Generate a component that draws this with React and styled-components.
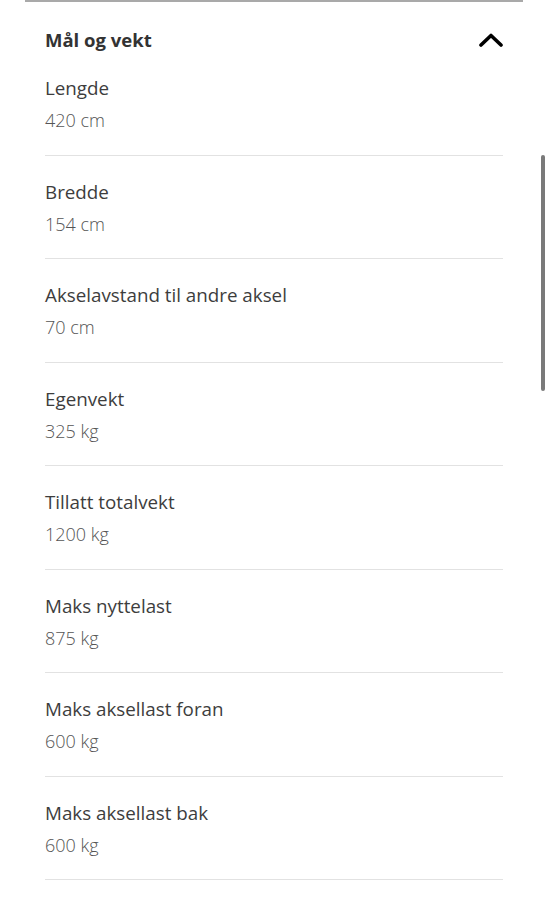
import React from "react";
import styled, { createGlobalStyle } from "styled-components";

const Global = createGlobalStyle`
  html, body {
    margin: 0;
    padding: 0;
    background: #fff;
  }
  body {
    font-family: "Open Sans", "Noto Sans", "Liberation Sans", sans-serif;
    -webkit-font-smoothing: antialiased;
  }
`;

const Page = styled.div`
  position: relative;
  width: 549px;
  height: 900px;
  overflow: hidden;
  padding: 0 26px 0 25px;
  box-sizing: border-box;
`;

const Panel = styled.section`
  border-top: 2px solid #a9a9a9;
  padding: 0 20px;
`;

const Header = styled.div`
  display: flex;
  align-items: center;
  justify-content: space-between;
  padding-top: 26px;
  height: 24px;
`;

const Title = styled.h2`
  margin: 0;
  font-size: 18.5px;
  line-height: 24px;
  font-weight: 700;
  color: #333;
`;

const Chevron = styled.svg`
  width: 24px;
  height: 14px;
`;

const Item = styled.div`
  padding: 24px 0 22.5px;
  border-bottom: 1px solid #e2e2e2;
`;

const Label = styled.div`
  font-size: 18.8px;
  line-height: 24px;
  color: #3d3d3d;
`;

const Value = styled.div`
  margin-top: 8px;
  font-size: 18px;
  line-height: 24px;
  font-weight: 300;
  color: #555;
`;

const Scrollbar = styled.div`
  position: absolute;
  left: 541px;
  top: 155px;
  width: 4px;
  height: 236px;
  border-radius: 2px;
  background: #7a7a7a;
`;

const specs = [
  ["Lengde", "420 cm"],
  ["Bredde", "154 cm"],
  ["Akselavstand til andre aksel", "70 cm"],
  ["Egenvekt", "325 kg"],
  ["Tillatt totalvekt", "1200 kg"],
  ["Maks nyttelast", "875 kg"],
  ["Maks aksellast foran", "600 kg"],
  ["Maks aksellast bak", "600 kg"],
];

export default function App() {
  return (
    <Page>
      <Global />
      <Panel>
        <Header>
          <Title>Mål og vekt</Title>
          <Chevron viewBox="0 0 24 14">
            <polyline
              points="2,12 12,2.5 22,12"
              fill="none"
              stroke="#000"
              strokeWidth="3.6"
              strokeLinecap="round"
              strokeLinejoin="round"
            />
          </Chevron>
        </Header>
        {specs.map(([label, value]) => (
          <Item key={label}>
            <Label>{label}</Label>
            <Value>{value}</Value>
          </Item>
        ))}
      </Panel>
      <Scrollbar />
    </Page>
  );
}
